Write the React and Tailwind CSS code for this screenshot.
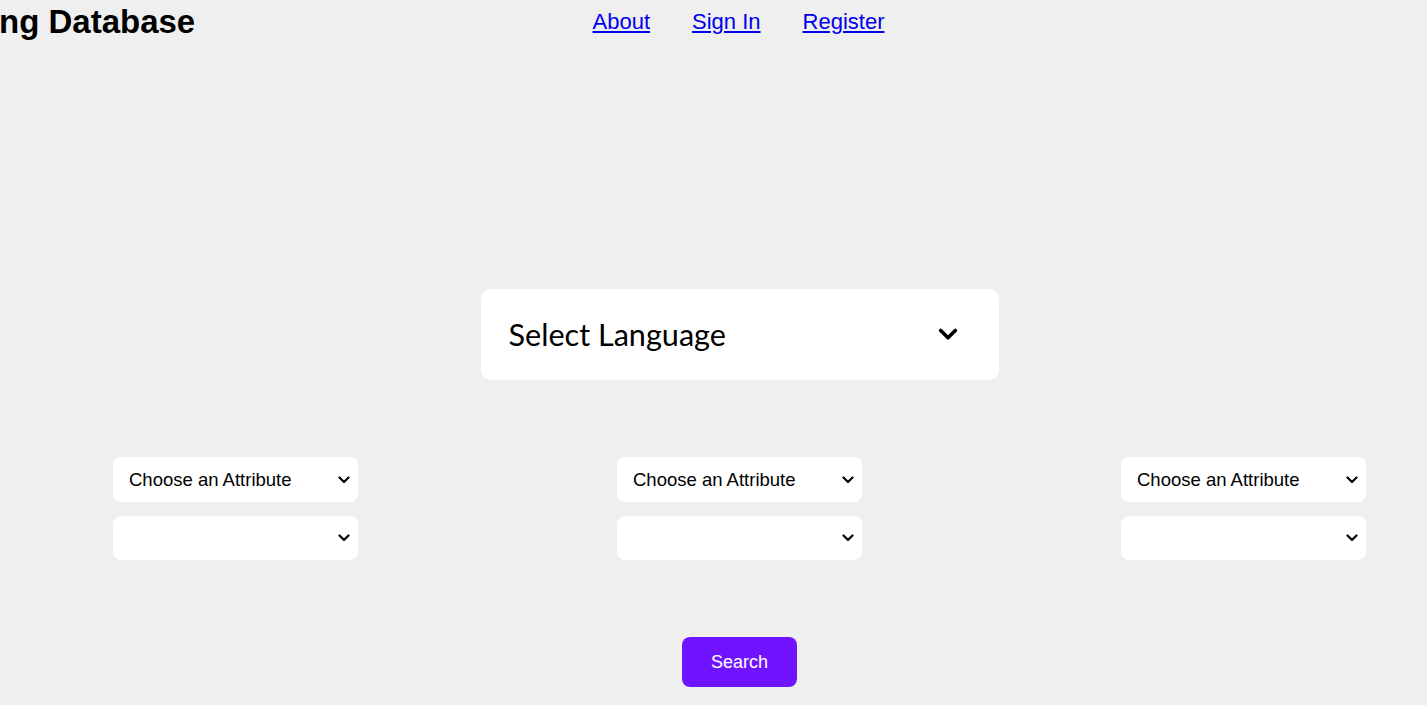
import React from 'react';

const Chevron = ({ className }) => (
  <svg viewBox="0 0 12 8" className={className} fill="none" stroke="currentColor" strokeWidth="2.2" strokeLinecap="round" strokeLinejoin="round">
    <path d="M1.5 1.5 6 6l4.5-4.5" />
  </svg>
);

const AttributeSelect = ({ placeholder, height }) => (
  <div className="relative w-full">
    <select
      defaultValue=""
      className={`w-full ${height} appearance-none rounded-[8px] bg-white pl-4 pr-8 text-[18.5px] text-black outline-none`}
    >
      {placeholder ? <option value="">{placeholder}</option> : <option value=""></option>}
    </select>
    <Chevron className="pointer-events-none absolute right-[8px] top-1/2 h-[8px] w-[12px] -translate-y-1/2 text-black" />
  </div>
);

export default function App() {
  return (
    <div className="min-h-screen w-full overflow-hidden bg-[#efefef] font-['Liberation_Sans',Arial,sans-serif] text-black">
      {/* Header */}
      <header className="grid h-[38px] grid-cols-[1fr_auto_1fr] items-start pl-[52px] pt-[5px]">
        <h1 className="-ml-[53px] whitespace-nowrap text-[33px] font-bold leading-none">ng Database</h1>
        <nav className="-ml-[2px] flex gap-[42px] text-[22px] text-[#0000ee]">
          <a href="#" className="underline">About</a>
          <a href="#" className="underline">Sign In</a>
          <a href="#" className="underline">Register</a>
        </nav>
        <div />
      </header>

      {/* Buscador */}
      <main className="flex flex-col items-center pl-[52px]">
        <div className="mt-[251px] flex h-[91px] w-[518px] items-center justify-between rounded-[10px] bg-white pl-[28px] pr-[41px]">
          <span className="font-['Lato',sans-serif] text-[30.6px]">Select Language</span>
          <Chevron className="h-[13px] w-[20px]" />
        </div>

        <div className="mt-[77px] flex w-full justify-between px-[61px]">
          {[0, 1, 2].map((i) => (
            <div key={i} className="flex w-[245px] flex-col gap-[14px]">
              <AttributeSelect placeholder="Choose an Attribute" height="h-[45px]" />
              <AttributeSelect height="h-[44px]" />
            </div>
          ))}
        </div>

        <button className="mt-[77px] h-[50px] w-[115px] rounded-[8px] bg-[#7014ff] text-[18px] text-white">
          Search
        </button>
      </main>
    </div>
  );
}
